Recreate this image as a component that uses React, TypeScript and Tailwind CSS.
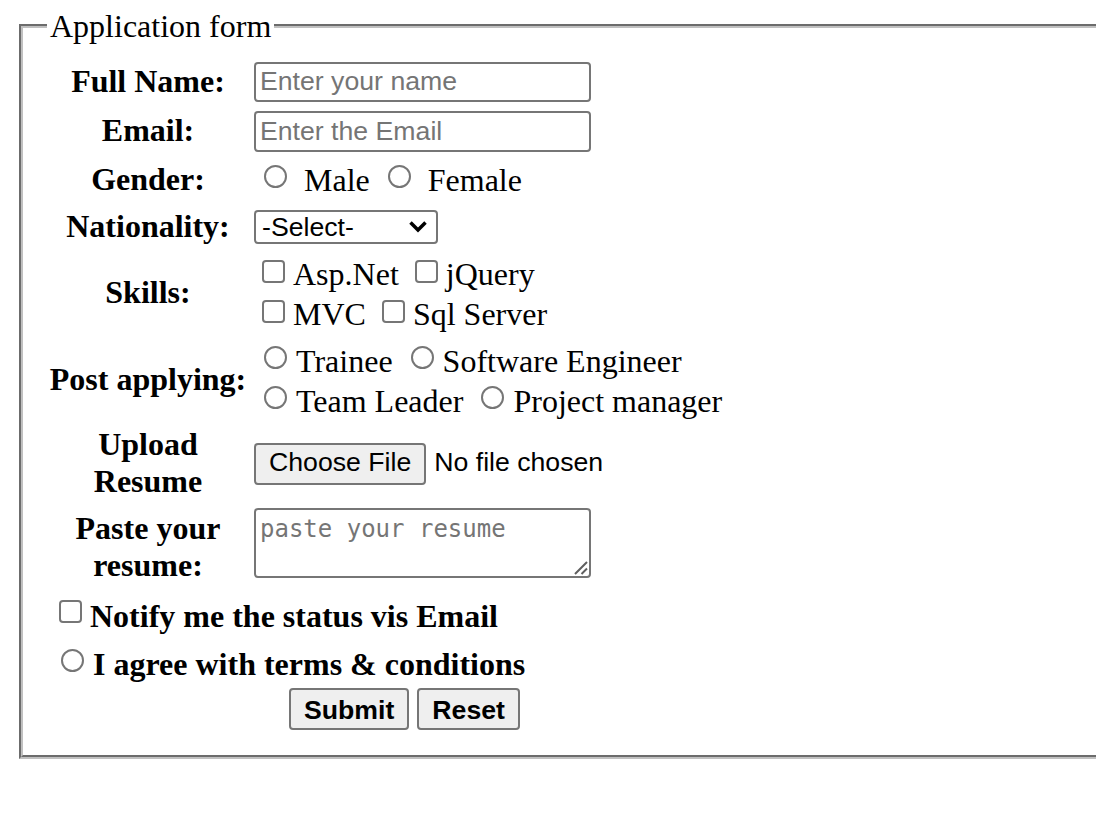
import React from "react";

const sans = "[font-family:'Liberation_Sans',Arial,sans-serif]";

function Check({ className = "" }: { className?: string }) {
  return (
    <span
      className={
        "inline-block w-[23px] h-[23px] border-2 border-[#767676] rounded-[4px] bg-white align-baseline mb-[2px] ml-[8px] mr-[8px] " +
        className
      }
    />
  );
}

function Radio({ className = "" }: { className?: string }) {
  return (
    <span
      className={
        "inline-block w-[23px] h-[23px] border-2 border-[#767676] rounded-full bg-white align-baseline mb-[3px] ml-[10px] mr-[9px] " +
        className
      }
    />
  );
}

export default function App() {
  return (
    <div className="min-h-[813px] overflow-hidden bg-white pt-[8px] pl-[19px] text-black [font-family:'Liberation_Serif','Times_New_Roman',serif] text-[32px]">
      <fieldset className="w-[1200px] border-4 [border-style:groove]! border-[#c0c0c0] pl-[24px] pt-[13px] pb-[25px]">
        <legend className="px-[3px] leading-[36.8px]">Application form</legend>
        <div className="ml-[1px] flex flex-col">
          {/* Full name */}
          <div className="flex h-[48px]">
            <div className="w-[200px] shrink-0 text-center font-bold leading-[36.8px] pt-[5px]">Full Name:</div>
            <div className="ml-[6px] pt-[4px]">
              <input
                placeholder="Enter your name"
                className={`block w-[337px] h-[40px] border-2 border-[#767676] rounded-[4px] px-[4px] ${sans} text-[26.67px] placeholder:text-[#757575] outline-none`}
              />
            </div>
          </div>
          {/* Email */}
          <div className="flex h-[51px]">
            <div className="w-[200px] shrink-0 text-center font-bold leading-[36.8px] pt-[6px]">Email:</div>
            <div className="ml-[6px] pt-[5px]">
              <input
                placeholder="Enter the Email"
                className={`block w-[337px] h-[41px] border-2 border-[#767676] rounded-[4px] px-[4px] ${sans} text-[26.67px] placeholder:text-[#757575] outline-none`}
              />
            </div>
          </div>
          {/* Gender */}
          <div className="flex h-[45px]">
            <div className="w-[200px] shrink-0 text-center font-bold leading-[36.8px] pt-[4px]">Gender:</div>
            <div className="ml-[6px] pt-[3px] leading-[40px] whitespace-nowrap">
              <Radio className="mr-[6px]" /> Male <Radio className="mr-[6px]" /> Female
            </div>
          </div>
          {/* Nationality */}
          <div className="flex h-[50px]">
            <div className="w-[200px] shrink-0 text-center font-bold leading-[36.8px] pt-[6px]">Nationality:</div>
            <div className="ml-[6px] pt-[8px]">
              <div className={`flex items-center justify-between w-[184px] h-[34px] border-2 border-[#767676] rounded-[4px] pl-[6px] pr-[8px] ${sans} text-[26.67px] leading-none`}>
                <span className="pt-[1px]">-Select-</span>
                <svg width="20" height="13" viewBox="0 0 20 13" fill="none">
                  <path d="M2.5 2.5 L10 10 L17.5 2.5" stroke="#000" strokeWidth="3.5" />
                </svg>
              </div>
            </div>
          </div>
          {/* Skills */}
          <div className="flex h-[84px]">
            <div className="w-[200px] shrink-0 text-center font-bold leading-[36.8px] pt-[22px]">Skills:</div>
            <div className="ml-[6px] pt-[2px] leading-[40px] whitespace-nowrap">
              <div>
                <Check />Asp.Net <Check />jQuery
              </div>
              <div>
                <Check />MVC <Check />Sql Server
              </div>
            </div>
          </div>
          {/* Post applying */}
          <div className="flex h-[86px]">
            <div className="w-[200px] shrink-0 text-center font-bold leading-[36.8px] pt-[25px] whitespace-nowrap">Post applying:</div>
            <div className="ml-[6px] pt-[5px] leading-[40px] whitespace-nowrap">
              <div>
                <Radio />Trainee <Radio />Software Engineer
              </div>
              <div>
                <Radio />Team Leader <Radio />Project manager
              </div>
            </div>
          </div>
          {/* Upload */}
          <div className="flex h-[83px]">
            <div className="w-[200px] shrink-0 text-center font-bold leading-[36.8px] pt-[4px]">
              Upload
              <br />
              Resume
            </div>
            <div className={`ml-[6px] pt-[21px] flex items-start ${sans} text-[26.67px]`}>
              <span className="flex items-center h-[42px] px-[13px] pb-[3px] border-2 border-[#767676] rounded-[4px] bg-[#efefef]">
                Choose File
              </span>
              <span className="leading-[38px] ml-[8px]">No file chosen</span>
            </div>
          </div>
          {/* Paste resume */}
          <div className="flex h-[85px]">
            <div className="w-[200px] shrink-0 text-center font-bold leading-[36.8px] pt-[5px]">
              Paste your
              <br />
              resume:
            </div>
            <div className="ml-[6px] pt-[3px]">
              <div className="relative w-[337px] h-[70px]">
                <textarea
                  placeholder="paste your resume"
                  className="block w-[337px] h-[70px] resize-none border-2 border-[#767676] rounded-[4px] px-[4px] pt-[4px] [font-family:'DejaVu_Sans_Mono',Consolas,monospace] text-[24px] leading-[30px] placeholder:text-[#757575] outline-none"
                />
                <svg className="absolute right-[3px] bottom-[3px]" width="16" height="16" viewBox="0 0 16 16" fill="none">
                  <path d="M15 3 L3 15 M15 9.5 L9.5 15" stroke="#5f5f5f" strokeWidth="2" />
                </svg>
              </div>
            </div>
          </div>
          {/* Notify */}
          <div className="h-[48px] pt-[6px] pl-[3px] leading-[40px] font-bold whitespace-nowrap">
            <Check className="mb-[4px]" />Notify me the status vis Email
          </div>
          {/* Agree */}
          <div className="h-[48px] pt-[6px] pl-[3px] leading-[40px] font-bold whitespace-nowrap">
            <Radio className="mr-[8px]" />I agree with terms &amp; conditions
          </div>
          {/* Buttons */}
          <div className={`flex gap-[8px] pl-[241px] pt-[2px] ${sans} text-[26.67px] font-bold`}>
            <button className="h-[42px] px-[13px] border-2 border-[#767676] rounded-[4px] bg-[#efefef]">Submit</button>
            <button className="h-[42px] px-[13px] border-2 border-[#767676] rounded-[4px] bg-[#efefef]">Reset</button>
          </div>
        </div>
      </fieldset>
    </div>
  );
}
